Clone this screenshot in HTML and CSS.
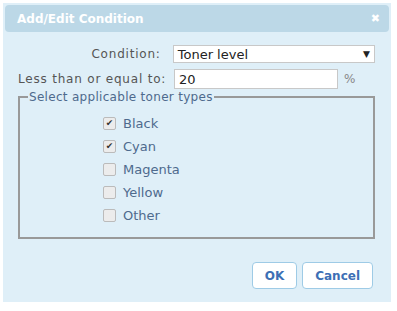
FILE: index.html
```html
<!DOCTYPE html>
<html lang="en">
<head>
    <meta charset="UTF-8">
    <title>Add/Edit Condition</title>
    <link rel="stylesheet" href="styles.css">
</head>
<body>
    <div class="dialog">
        <div class="dialog-title">
            <span>Add/Edit Condition</span>
            <span class="close">&#x2716;</span>
        </div>

        <div class="dialog-body">
            <div class="form-row">
                <label class="form-label" for="condition">Condition:</label>
                <div class="select-box" id="condition">
                    <span>Toner level</span>
                    <span class="arrow">&#x25BC;</span>
                </div>
            </div>

            <div class="form-row">
                <label class="form-label" for="level">Less than or equal to:</label>
                <input class="text-input" id="level" type="text" value="20">
                <span class="unit">%</span>
            </div>

            <fieldset class="toner-set">
                <legend>Select applicable toner types</legend>
                <div class="toner-list">
                    <label class="toner"><span class="check checked">&#x2714;</span>Black</label>
                    <label class="toner"><span class="check checked">&#x2714;</span>Cyan</label>
                    <label class="toner"><span class="check"></span>Magenta</label>
                    <label class="toner"><span class="check"></span>Yellow</label>
                    <label class="toner"><span class="check"></span>Other</label>
                </div>
            </fieldset>
        </div>

        <div class="dialog-buttons">
            <button>OK</button>
            <button>Cancel</button>
        </div>
    </div>
</body>
</html>
```

FILE: styles.css
```css
body {
    margin: 0;
    padding: 3px;
    background-color: #fff;
    font-family: 'DejaVu Sans', Verdana, sans-serif;
    font-size: 12px;
}

.dialog {
    width: 388px;
    height: 299px;
    background-color: #dfeff8;
    padding: 2px;
    box-sizing: border-box;
    display: flex;
    flex-direction: column;
}

.dialog-title {
    height: 27px;
    background-color: #bcd8e7;
    border-radius: 4px;
    color: #fff;
    font-weight: bold;
    display: flex;
    align-items: center;
    justify-content: space-between;
    padding: 0 9px 0 12px;
}

.close {
    font-size: 11px;
}

.dialog-body {
    padding: 13px 14px 0 13px;
}

.form-row {
    display: flex;
    align-items: center;
    margin-bottom: 6px;
    color: #555;
}

.form-row + .form-row {
    margin-bottom: 1px;
}

.form-label {
    width: 156px;
    box-sizing: border-box;
    text-align: right;
    padding-right: 12px;
    letter-spacing: 0.8px;
    white-space: nowrap;
}

.select-box {
    width: 204px;
    height: 18px;
    box-sizing: border-box;
    background: #fff;
    border: 1px solid #c8c8c8;
    display: flex;
    align-items: center;
    justify-content: space-between;
    padding: 0 4px;
    color: #222;
    font-size: 13px;
}

.arrow {
    font-size: 9px;
}

.text-input {
    width: 164px;
    height: 20px;
    box-sizing: border-box;
    border: 1px solid #c8c8c8;
    padding: 0 4px;
    font-family: inherit;
    font-size: 13px;
    color: #222;
}

.unit {
    margin-left: 6px;
    color: #888;
}

.toner-set {
    margin: 0;
    border: 2px solid #999;
    padding: 12px 0 18px 0;
    height: 149px;
    box-sizing: border-box;
}

.toner-set legend {
    color: #4e6a8d;
    padding: 0 1px;
    margin-left: 8px;
    letter-spacing: 0.3px;
}

.toner-list {
    display: flex;
    flex-direction: column;
    gap: 8px;
    padding-left: 83px;
}

.toner {
    display: flex;
    align-items: center;
    color: #4e6a8d;
    font-size: 13px;
}

.check {
    width: 11px;
    height: 11px;
    border: 1px solid #bbb;
    border-radius: 2px;
    background: #ececec;
    margin-right: 7px;
    font-size: 9px;
    line-height: 11px;
    text-align: center;
    color: #333;
}

.dialog-buttons {
    margin-top: auto;
    display: flex;
    justify-content: flex-end;
    gap: 5px;
    padding: 0 16px 11px 0;
}

button {
    height: 27px;
    padding: 0 12px;
    border: 1px solid #9ecbe6;
    border-radius: 4px;
    background: #fff;
    color: #3d6fb5;
    font-family: inherit;
    font-weight: bold;
    font-size: 12px;
}
```
